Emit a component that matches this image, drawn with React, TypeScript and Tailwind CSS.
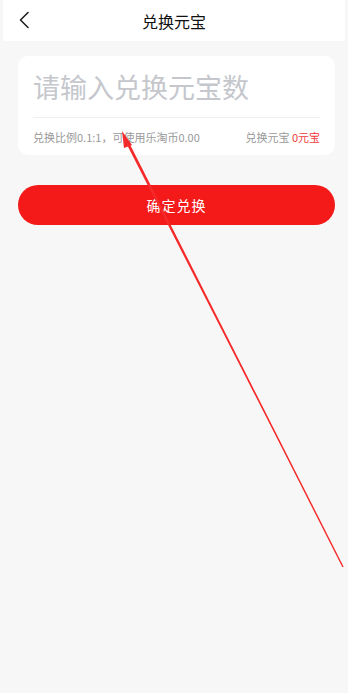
import { useState } from "react";

export default function App() {
  const [amount, setAmount] = useState("");

  return (
    <div
      className="relative min-h-[693px] w-full bg-[#f7f7f7] overflow-hidden"
      style={{ fontFamily: '"Noto Sans CJK SC", "Noto Sans", sans-serif' }}
    >
      {/* Header */}
      <header className="relative flex h-[41px] items-center justify-center bg-white mx-[3px]">
        <button className="absolute left-[13px] top-[10px] flex h-[20px] w-[16px] items-center justify-center">
          <svg width="12" height="18" viewBox="0 0 12 18" fill="none">
            <path d="M10 1.5L2.5 9L10 16.5" stroke="#222" strokeWidth="1.6" strokeLinecap="round" strokeLinejoin="round" />
          </svg>
        </button>
        <h1 className="text-[16px] leading-none text-[#111]">兑换元宝</h1>
      </header>

      {/* Card */}
      <div className="ml-[18px] mt-[15px] w-[317px] rounded-[10px] bg-white px-[15px] pt-[10px] pb-[12px]">
        <input
          value={amount}
          onChange={(e) => setAmount(e.target.value)}
          placeholder="请输入兑换元宝数"
          className="h-[40px] w-full bg-transparent text-[27px] leading-none text-[#333] outline-none placeholder:text-[#c5c7cd]"
        />
        <div className="mt-[11px] h-px bg-[#eeeeee]" />
        <div className="mt-[14px] flex items-center justify-between text-[11px] leading-none text-[#999]">
          <span>兑换比例0.1:1，可使用乐淘币0.00</span>
          <span>
            兑换元宝 <span className="text-[#f23a3a]">0元宝</span>
          </span>
        </div>
      </div>

      {/* Submit */}
      <button className="ml-[18px] mt-[30px] flex h-[40px] w-[317px] items-center justify-center rounded-full bg-[#f41a1a] text-[14px] tracking-[1px] text-white">
        确定兑换
      </button>

      {/* Annotation arrow */}
      <svg className="pointer-events-none absolute left-0 top-0" width="348" height="693" viewBox="0 0 348 693">
        <path d="M343 567 L127.6 141 L125.6 142 Z" fill="#f52a2a" />
        <line x1="343" y1="567" x2="128" y2="142" stroke="#f52a2a" strokeWidth="1.4" />
        <polygon points="122,131 132,145 124,148" fill="#f52a2a" />
      </svg>
    </div>
  );
}
